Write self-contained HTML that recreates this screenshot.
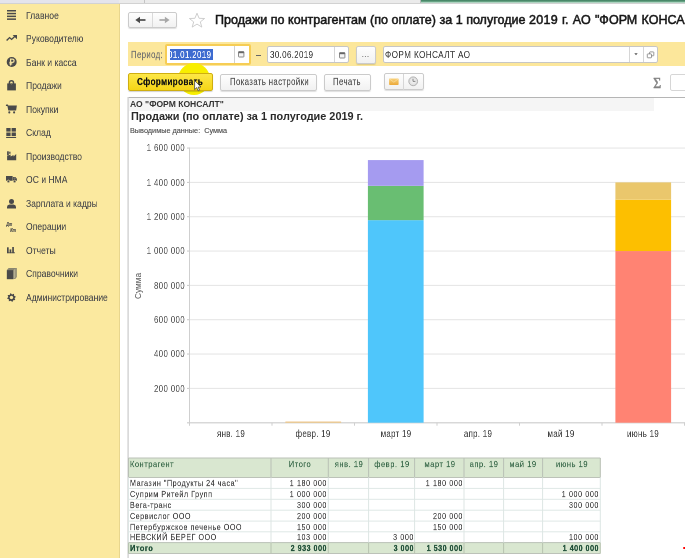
<!DOCTYPE html><html><head><meta charset="utf-8"><style>
*{margin:0;padding:0;box-sizing:border-box}
html,body{width:685px;height:558px;overflow:hidden;background:#fff;font-family:"Liberation Sans",sans-serif;position:relative}
.a{position:absolute}
.t{position:absolute;white-space:nowrap;line-height:1;will-change:transform}
.btn{position:absolute;background:linear-gradient(#fefefe,#f1f1f1);border:1px solid #cbcbcb;border-radius:2px;box-shadow:0 1px 1px rgba(0,0,0,.13)}
.fld{position:absolute;background:#fff;border:1px solid #c6c6c6;border-radius:2px}
svg{position:absolute;overflow:visible}
</style></head><body>
<div class="a" style="left:0;top:0;width:685px;height:3px;background:#ebebeb"></div>
<div class="a" style="left:0;top:3px;width:685px;height:1px;background:#d2d2d2"></div>
<div class="a" style="left:0;top:0;width:119px;height:3px;background:#e4e4ec"></div>
<div class="a" style="left:144px;top:0;width:1px;height:3px;background:#c4c4c4"></div>
<div class="a" style="left:420px;top:0;width:1px;height:3px;background:#b9b9b9"></div>
<div class="a" style="left:421px;top:0;width:264px;height:3px;background:linear-gradient(#3f7f60,#5b9a7a 45%,#d2ecdf)"></div>
<div class="a" style="left:0;top:4px;width:119px;height:554px;background:#fbe99f"></div>
<div class="a" style="left:119px;top:4px;width:1px;height:554px;background:#e8d68e"></div>
<div class="t" style="left:26.1px;top:10.70px;font-size:19.5px;color:#4f4f4f;-webkit-text-stroke:0.2px #4f4f4f;transform:scale(0.44,0.5);transform-origin:0 0">Главное</div>
<div class="t" style="left:26.1px;top:34.20px;font-size:19.5px;color:#4f4f4f;-webkit-text-stroke:0.2px #4f4f4f;transform:scale(0.44,0.5);transform-origin:0 0">Руководителю</div>
<div class="t" style="left:26.1px;top:57.70px;font-size:19.5px;color:#4f4f4f;-webkit-text-stroke:0.2px #4f4f4f;transform:scale(0.44,0.5);transform-origin:0 0">Банк и касса</div>
<div class="t" style="left:26.1px;top:81.20px;font-size:19.5px;color:#4f4f4f;-webkit-text-stroke:0.2px #4f4f4f;transform:scale(0.44,0.5);transform-origin:0 0">Продажи</div>
<div class="t" style="left:26.1px;top:104.70px;font-size:19.5px;color:#4f4f4f;-webkit-text-stroke:0.2px #4f4f4f;transform:scale(0.44,0.5);transform-origin:0 0">Покупки</div>
<div class="t" style="left:26.1px;top:128.20px;font-size:19.5px;color:#4f4f4f;-webkit-text-stroke:0.2px #4f4f4f;transform:scale(0.44,0.5);transform-origin:0 0">Склад</div>
<div class="t" style="left:26.1px;top:151.70px;font-size:19.5px;color:#4f4f4f;-webkit-text-stroke:0.2px #4f4f4f;transform:scale(0.44,0.5);transform-origin:0 0">Производство</div>
<div class="t" style="left:26.1px;top:175.20px;font-size:19.5px;color:#4f4f4f;-webkit-text-stroke:0.2px #4f4f4f;transform:scale(0.44,0.5);transform-origin:0 0">ОС и НМА</div>
<div class="t" style="left:26.1px;top:198.70px;font-size:19.5px;color:#4f4f4f;-webkit-text-stroke:0.2px #4f4f4f;transform:scale(0.44,0.5);transform-origin:0 0">Зарплата и кадры</div>
<div class="t" style="left:26.1px;top:222.20px;font-size:19.5px;color:#4f4f4f;-webkit-text-stroke:0.2px #4f4f4f;transform:scale(0.44,0.5);transform-origin:0 0">Операции</div>
<div class="t" style="left:26.1px;top:245.70px;font-size:19.5px;color:#4f4f4f;-webkit-text-stroke:0.2px #4f4f4f;transform:scale(0.44,0.5);transform-origin:0 0">Отчеты</div>
<div class="t" style="left:26.1px;top:269.20px;font-size:19.5px;color:#4f4f4f;-webkit-text-stroke:0.2px #4f4f4f;transform:scale(0.44,0.5);transform-origin:0 0">Справочники</div>
<div class="t" style="left:26.1px;top:292.70px;font-size:19.5px;color:#4f4f4f;-webkit-text-stroke:0.2px #4f4f4f;transform:scale(0.44,0.5);transform-origin:0 0">Администрирование</div>
<svg style="left:0;top:10.30px" width="24" height="24" viewBox="0 0 24 24"><g fill="#4a4a4a"><rect x="7" y="0" width="9" height="1.5"/><rect x="7" y="2.8" width="9" height="1.5"/><rect x="7" y="5.6" width="9" height="1.5"/><rect x="7" y="8.4" width="9" height="1.5"/></g></svg>
<svg style="left:0;top:35.10px" width="24" height="24" viewBox="0 0 24 24"><path d="M6.6 5.6 L9.6 2.6 L11.6 4.4 L15 1.2" fill="none" stroke="#4a4a4a" stroke-width="1.4"/><path d="M12.6 0 L17 0 L17 4.2 Z" fill="#4a4a4a"/></svg>
<svg style="left:0;top:57.30px" width="24" height="24" viewBox="0 0 24 24"><circle cx="11.7" cy="5" r="5" fill="#4a4a4a"/><path d="M10.6 8.5 V2.1 H12.5 A1.6 1.6 0 0 1 12.5 5.3 H9.4 M9.4 6.8 H12.3" fill="none" stroke="#f3e2a0" stroke-width="1.25"/></svg>
<svg style="left:0;top:79.80px" width="24" height="24" viewBox="0 0 24 24"><path d="M7.2 3.4 H15.9 V10.4 H7.2 Z" fill="#4a4a4a"/><path d="M9.4 4.6 V2.9 A2.05 2.1 0 0 1 13.5 2.9 V4.6" fill="none" stroke="#4a4a4a" stroke-width="1.5"/><rect x="11.1" y="3.4" width="0.9" height="1.4" fill="#77705a"/></svg>
<svg style="left:0;top:104.00px" width="24" height="24" viewBox="0 0 24 24"><rect x="5.9" y="0.5" width="2.3" height="1.5" rx="0.6" fill="#4a4a4a"/><path d="M7.3 1.6 H16.9 L16.1 6.6 H8.3 Z" fill="#4a4a4a"/><circle cx="9.3" cy="8.4" r="1.05" fill="#4a4a4a"/><circle cx="14.1" cy="8.4" r="1.05" fill="#4a4a4a"/></svg>
<svg style="left:0;top:127.70px" width="24" height="24" viewBox="0 0 24 24"><g fill="#4a4a4a"><rect x="6.3" y="0" width="4.3" height="3.6"/><rect x="11.6" y="0" width="4.3" height="3.6"/><rect x="6.3" y="4.5" width="4.3" height="3.6"/><rect x="11.6" y="4.5" width="4.3" height="3.6"/><rect x="6.1" y="9" width="10" height="1"/></g></svg>
<svg style="left:0;top:151.40px" width="24" height="24" viewBox="0 0 24 24"><path d="M7.1 9.2 V5.0 L10.6 3.6 V5.4 L13.5 3.9 V5.5 L16.2 3.0 V9.2 Z" fill="#4a4a4a"/><rect x="7.1" y="0.3" width="1.7" height="4.2" fill="#4a4a4a"/><rect x="9.2" y="0.7" width="1.3" height="2.1" fill="#4a4a4a"/></svg>
<svg style="left:0;top:176.40px" width="24" height="24" viewBox="0 0 24 24"><path d="M6.0 0 H12.6 V4.8 H6.0 Z M12.9 1.0 H15.3 L16.9 2.8 V4.8 H12.9 Z" fill="#4a4a4a"/><path d="M13.6 1.6 H15 L16 2.7 H13.6 Z" fill="#8a8470"/><circle cx="8.4" cy="5.4" r="1.3" fill="#4a4a4a" stroke="#fbe99f" stroke-width="0.6"/><circle cx="14.6" cy="5.4" r="1.3" fill="#4a4a4a" stroke="#fbe99f" stroke-width="0.6"/></svg>
<svg style="left:0;top:198.90px" width="24" height="24" viewBox="0 0 24 24"><circle cx="11.5" cy="2.6" r="2.5" fill="#4a4a4a"/><path d="M7 9.4 V8 Q7 5.8 9.5 5.6 H13.5 Q16 5.8 16 8 V9.4 Z" fill="#4a4a4a"/></svg>
<svg style="left:0;top:0;will-change:transform" width="24" height="240"><text x="6.3" y="226.3" font-family="Liberation Sans" font-weight="bold" font-style="italic" font-size="6.2" fill="#4a4a4a" stroke="#4a4a4a" stroke-width="0.2" textLength="5.8" lengthAdjust="spacingAndGlyphs">Дт</text><text x="10.2" y="231.6" font-family="Liberation Sans" font-weight="bold" font-style="italic" font-size="6.2" fill="#4a4a4a" stroke="#4a4a4a" stroke-width="0.2" textLength="5.8" lengthAdjust="spacingAndGlyphs">Кт</text></svg>
<svg style="left:0;top:247.30px" width="24" height="24" viewBox="0 0 24 24"><g fill="#4a4a4a"><rect x="7" y="0.3" width="1.7" height="5.8"/><rect x="9.6" y="2.4" width="1.7" height="3.7"/><rect x="12.2" y="0" width="1.7" height="6.1"/><rect x="7" y="5.4" width="8" height="0.8"/></g></svg>
<svg style="left:0;top:267.80px" width="24" height="24" viewBox="0 0 24 24"><path d="M8.6 0 H16.8 V9 L15.2 11 H6.9 V2 Z" fill="#8a8670"/><rect x="6.9" y="2.2" width="6.6" height="9" fill="#4a4a4a"/><path d="M13.5 2.2 L15.4 0.4 V9.4 L13.5 11.2" fill="#b3ae92"/></svg>
<svg style="left:0;top:292.60px" width="24" height="24" viewBox="0 0 24 24"><polygon points="15.96,3.65 14.59,5.17 15.27,7.11 13.23,7.21 12.35,9.06 10.83,7.69 8.89,8.37 8.79,6.33 6.94,5.45 8.31,3.93 7.63,1.99 9.67,1.89 10.55,0.04 12.07,1.41 14.01,0.73 14.11,2.77" fill="#4a4a4a"/><circle cx="11.45" cy="4.55" r="1.7" fill="#fbe99f"/></svg>
<div class="btn" style="left:128px;top:12px;width:49px;height:16px"></div>
<div class="a" style="left:152px;top:13px;width:1px;height:14px;background:#dadada"></div>
<svg style="left:0;top:0" width="685" height="40"><path d="M139.5 20 H145.5" stroke="#4a4a4a" stroke-width="1.7"/><path d="M135.3 20 L140 16.7 V23.3 Z" fill="#4a4a4a"/><path d="M159.4 20 H165.5" stroke="#a8a8a8" stroke-width="1.7"/><path d="M169.6 20 L164.9 16.7 V23.3 Z" fill="#a8a8a8"/><path d="M197 13.2 L199.1 18.3 L204.6 18.5 L200.3 21.9 L201.8 27.1 L197 24.1 L192.2 27.1 L193.7 21.9 L189.4 18.5 L194.9 18.3 Z" fill="none" stroke="#c8c8c8" stroke-width="0.9"/></svg>
<div class="t" style="left:215.3px;top:14.4px;font-size:12.54px;color:#151515;-webkit-text-stroke:0.5px #151515">Продажи по контрагентам (по оплате) за 1 полугодие</div>
<div class="t" style="left:529.1px;top:14.4px;font-size:12.54px;color:#151515;-webkit-text-stroke:0.5px #151515;letter-spacing:0.3px">2019</div>
<div class="t" style="left:562.3px;top:14.4px;font-size:12.54px;color:#151515;-webkit-text-stroke:0.5px #151515;word-spacing:0.8px">г. АО "ФОРМ КОНСАЛТ"</div>
<div class="a" style="left:128px;top:42px;width:557px;height:24.2px;background:#fce79b"></div>
<div class="t" style="left:131.0px;top:49.7px;font-size:19.5px;color:#707070;transform:scale(0.4,0.5);transform-origin:0 0;-webkit-text-stroke:0.3px #707070;letter-spacing:0.9px">Период:</div>
<div class="a" style="left:165px;top:44px;width:86px;height:21px;background:#fff;border:2px solid #f6cd55;border-radius:2px"></div>
<div class="a" style="left:234px;top:46px;width:1px;height:17px;background:#d0d0d0"></div>
<div class="a" style="left:169.5px;top:49px;width:43px;height:10.5px;background:#3d6bd0"></div>
<div class="a" style="left:169.5px;top:47px;width:64px;height:16px;overflow:hidden"><div class="t" style="left:-1.7px;top:2.7px;font-size:19.5px;color:#fff;-webkit-text-stroke:0.2px #fff;transform:scale(0.41,0.5);transform-origin:0 0;letter-spacing:0.8px">01.01.2019</div></div>
<svg style="left:238px;top:51.4px" width="8" height="8"><rect x="0.5" y="0.6" width="5.4" height="5.4" rx="0.5" fill="#f4f4f4" stroke="#6e6e6e" stroke-width="0.8"/><rect x="0.5" y="0.6" width="5.4" height="1.6" fill="#666"/></svg>
<div class="a" style="left:255.5px;top:54.6px;width:5px;height:1px;background:#666"></div>
<div class="fld" style="left:267px;top:46px;width:82px;height:17px"></div>
<div class="a" style="left:334px;top:47px;width:1px;height:15px;background:#d6d6d6"></div>
<div class="t" style="left:269.6px;top:49.7px;font-size:19.5px;color:#444;transform:scale(0.41,0.5);transform-origin:0 0;-webkit-text-stroke:0.2px #444;letter-spacing:0.8px">30.06.2019</div>
<svg style="left:338.5px;top:51.6px" width="8" height="8"><rect x="0.5" y="0.6" width="5.4" height="5.4" rx="0.5" fill="#f4f4f4" stroke="#6e6e6e" stroke-width="0.8"/><rect x="0.5" y="0.6" width="5.4" height="1.6" fill="#666"/></svg>
<div class="btn" style="left:356px;top:46px;width:20px;height:18px"></div>
<svg style="left:0;top:0" width="685" height="70"><g fill="#6a6a6a"><circle cx="362.8" cy="56.5" r="0.55"/><circle cx="365.4" cy="56.5" r="0.55"/><circle cx="368" cy="56.5" r="0.55"/></g></svg>
<div class="fld" style="left:382.5px;top:46px;width:275.5px;height:17px"></div>
<div class="a" style="left:629px;top:47px;width:1px;height:15px;background:#d6d6d6"></div>
<div class="a" style="left:643px;top:47px;width:1px;height:15px;background:#d6d6d6"></div>
<div class="t" style="left:385.4px;top:49.9px;font-size:19.5px;color:#444;transform:scale(0.42,0.5);transform-origin:0 0;-webkit-text-stroke:0.2px #444;letter-spacing:0.9px">ФОРМ КОНСАЛТ АО</div>
<svg style="left:0;top:0" width="685" height="90"><path d="M634.3 53.3 H637.7 L636 55.3 Z" fill="#555"/><rect x="649.6" y="51.9" width="4.2" height="3.9" rx="0.5" fill="none" stroke="#777" stroke-width="0.75"/><rect x="647.3" y="53.9" width="4.2" height="3.9" rx="0.5" fill="#fff" stroke="#777" stroke-width="0.75"/></svg>
<div class="a" style="left:177.7px;top:63px;width:32px;height:32px;border-radius:50%;background:#f8ee00"></div>
<div class="a" style="left:128px;top:73px;width:85px;height:17.5px;background:linear-gradient(#fde747,#f5d516);border:1px solid #cfae10;border-radius:2px;box-shadow:0 1px 1px rgba(0,0,0,.18)"></div>
<div class="t" style="left:137px;top:76.8px;font-size:19.5px;font-weight:bold;color:#111;-webkit-text-stroke:0.3px #111;transform:scale(0.42,0.5);transform-origin:0 0;letter-spacing:0.75px">Сформировать</div>
<div class="btn" style="left:220px;top:73.5px;width:97px;height:17px"></div>
<div class="t" style="left:229.5px;top:76.8px;font-size:19.5px;color:#555;transform:scale(0.4,0.5);transform-origin:0 0;-webkit-text-stroke:0.3px #555;letter-spacing:0.95px">Показать настройки</div>
<div class="btn" style="left:324px;top:73.5px;width:47px;height:17px"></div>
<div class="t" style="left:333.3px;top:76.8px;font-size:19.5px;color:#555;transform:scale(0.4,0.5);transform-origin:0 0;-webkit-text-stroke:0.3px #555;letter-spacing:1.0px">Печать</div>
<div class="btn" style="left:384px;top:73.3px;width:40px;height:17px"></div>
<div class="a" style="left:403px;top:74px;width:1px;height:15.5px;background:#d6d6d6"></div>
<svg style="left:0;top:0" width="685" height="100"><defs><linearGradient id="env" x1="0" y1="0" x2="0" y2="1"><stop offset="0" stop-color="#f8d27c"/><stop offset="1" stop-color="#eba93a"/></linearGradient><radialGradient id="clk"><stop offset="0" stop-color="#f6f6f6"/><stop offset="1" stop-color="#dcdcdc"/></radialGradient></defs><rect x="389.1" y="78.4" width="9.5" height="6.6" rx="0.8" fill="url(#env)"/><path d="M389.5 78.9 L393.85 82.2 L398.2 78.9" fill="none" stroke="#fbe1a6" stroke-width="0.7"/><circle cx="413.2" cy="81.3" r="4.4" fill="url(#clk)" stroke="#ababab" stroke-width="0.9"/><path d="M413.0 78.8 V81.4 H415.4" fill="none" stroke="#7c7c7c" stroke-width="0.9"/><text x="653.3" y="87.8" font-family="Liberation Serif" font-size="13.6" fill="#828282" stroke="#828282" stroke-width="0.45">Σ</text></svg>
<div class="a" style="left:670px;top:74px;width:20px;height:16.5px;background:#fff;border:1px solid #d6d6d6;border-radius:2px"></div>
<div class="a" style="left:128px;top:97px;width:557px;height:1px;background:#b5b5b5"></div>
<svg style="left:0;top:0" width="685" height="558"><rect x="127.4" y="97" width="1.4" height="461" fill="#d2d2d2"/></svg>
<div class="a" style="left:129px;top:98px;width:524.5px;height:12.7px;background:#f5f5f5"></div>
<div class="t" style="left:130.3px;top:100px;font-size:8.55px;font-weight:bold;color:#333">АО "ФОРМ КОНСАЛТ"</div>
<div class="t" style="left:130.8px;top:111.4px;font-size:10.9px;font-weight:bold;color:#2a2a2a">Продажи (по оплате) за 1 полугодие 2019 г.</div>
<div class="t" style="left:130.3px;top:127.2px;font-size:7.3px;color:#484848;-webkit-text-stroke:0.1px #484848">Выводимые данные:&nbsp; Сумма</div>
<svg style="left:0;top:0" width="685" height="558"><rect x="189.5" y="387.87" width="495.5" height="1" fill="#e4e4e4"/><rect x="187.0" y="387.87" width="2.5" height="1" fill="#c8c8c8"/><rect x="189.5" y="353.54" width="495.5" height="1" fill="#e4e4e4"/><rect x="187.0" y="353.54" width="2.5" height="1" fill="#c8c8c8"/><rect x="189.5" y="319.21" width="495.5" height="1" fill="#e4e4e4"/><rect x="187.0" y="319.21" width="2.5" height="1" fill="#c8c8c8"/><rect x="189.5" y="284.88" width="495.5" height="1" fill="#e4e4e4"/><rect x="187.0" y="284.88" width="2.5" height="1" fill="#c8c8c8"/><rect x="189.5" y="250.55" width="495.5" height="1" fill="#e4e4e4"/><rect x="187.0" y="250.55" width="2.5" height="1" fill="#c8c8c8"/><rect x="189.5" y="216.22" width="495.5" height="1" fill="#e4e4e4"/><rect x="187.0" y="216.22" width="2.5" height="1" fill="#c8c8c8"/><rect x="189.5" y="181.89" width="495.5" height="1" fill="#e4e4e4"/><rect x="187.0" y="181.89" width="2.5" height="1" fill="#c8c8c8"/><rect x="189.5" y="147.56" width="495.5" height="1" fill="#e4e4e4"/><rect x="187.0" y="147.56" width="2.5" height="1" fill="#c8c8c8"/><rect x="189.0" y="147.56" width="1" height="277.64" fill="#cfcfcf"/><rect x="187.0" y="422.20" width="498.0" height="1.2" fill="#cfcfcf"/><rect x="189.00" y="422.70" width="1" height="3" fill="#cfcfcf"/><rect x="271.50" y="422.70" width="1" height="3" fill="#cfcfcf"/><rect x="354.00" y="422.70" width="1" height="3" fill="#cfcfcf"/><rect x="436.50" y="422.70" width="1" height="3" fill="#cfcfcf"/><rect x="519.00" y="422.70" width="1" height="3" fill="#cfcfcf"/><rect x="601.50" y="422.70" width="1" height="3" fill="#cfcfcf"/><rect x="684.00" y="422.70" width="1" height="3" fill="#cfcfcf"/><rect x="285.40" y="422.19" width="55.7" height="0.51" fill="#eac46a"/><rect x="285.40" y="421.50" width="55.7" height="1" fill="#f0c890"/><rect x="367.90" y="220.15" width="55.7" height="202.55" fill="#4fc6fb"/><rect x="367.90" y="185.82" width="55.7" height="34.33" fill="#69be72"/><rect x="367.90" y="160.08" width="55.7" height="25.75" fill="#a59bf0"/><rect x="615.40" y="251.05" width="55.7" height="171.65" fill="#ff8373"/><rect x="615.40" y="199.55" width="55.7" height="51.50" fill="#fdbf00"/><rect x="615.40" y="182.39" width="55.7" height="17.16" fill="#eac76c"/></svg>
<div class="t" style="left:35.20px;width:150px;text-align:right;top:383.67px;font-size:19.5px;color:#555;-webkit-text-stroke:0.15px #555;letter-spacing:1.0px;transform:scale(0.40,0.5);transform-origin:150px 0">200 000</div>
<div class="t" style="left:35.20px;width:150px;text-align:right;top:349.34px;font-size:19.5px;color:#555;-webkit-text-stroke:0.15px #555;letter-spacing:1.0px;transform:scale(0.40,0.5);transform-origin:150px 0">400 000</div>
<div class="t" style="left:35.20px;width:150px;text-align:right;top:315.01px;font-size:19.5px;color:#555;-webkit-text-stroke:0.15px #555;letter-spacing:1.0px;transform:scale(0.40,0.5);transform-origin:150px 0">600 000</div>
<div class="t" style="left:35.20px;width:150px;text-align:right;top:280.68px;font-size:19.5px;color:#555;-webkit-text-stroke:0.15px #555;letter-spacing:1.0px;transform:scale(0.40,0.5);transform-origin:150px 0">800 000</div>
<div class="t" style="left:35.20px;width:150px;text-align:right;top:246.35px;font-size:19.5px;color:#555;-webkit-text-stroke:0.15px #555;letter-spacing:1.0px;transform:scale(0.40,0.5);transform-origin:150px 0">1 000 000</div>
<div class="t" style="left:35.20px;width:150px;text-align:right;top:212.02px;font-size:19.5px;color:#555;-webkit-text-stroke:0.15px #555;letter-spacing:1.0px;transform:scale(0.40,0.5);transform-origin:150px 0">1 200 000</div>
<div class="t" style="left:35.20px;width:150px;text-align:right;top:177.69px;font-size:19.5px;color:#555;-webkit-text-stroke:0.15px #555;letter-spacing:1.0px;transform:scale(0.40,0.5);transform-origin:150px 0">1 400 000</div>
<div class="t" style="left:35.20px;width:150px;text-align:right;top:143.36px;font-size:19.5px;color:#555;-webkit-text-stroke:0.15px #555;letter-spacing:1.0px;transform:scale(0.40,0.5);transform-origin:150px 0">1 600 000</div>
<div class="t" style="left:130.75px;width:200px;text-align:center;top:428.6px;font-size:19.5px;color:#444;-webkit-text-stroke:0.15px #444;letter-spacing:0.6px;transform:scale(0.41,0.5);transform-origin:100px 0">янв. 19</div>
<div class="t" style="left:213.25px;width:200px;text-align:center;top:428.6px;font-size:19.5px;color:#444;-webkit-text-stroke:0.15px #444;letter-spacing:0.6px;transform:scale(0.41,0.5);transform-origin:100px 0">февр. 19</div>
<div class="t" style="left:295.75px;width:200px;text-align:center;top:428.6px;font-size:19.5px;color:#444;-webkit-text-stroke:0.15px #444;letter-spacing:0.6px;transform:scale(0.41,0.5);transform-origin:100px 0">март 19</div>
<div class="t" style="left:378.25px;width:200px;text-align:center;top:428.6px;font-size:19.5px;color:#444;-webkit-text-stroke:0.15px #444;letter-spacing:0.6px;transform:scale(0.41,0.5);transform-origin:100px 0">апр. 19</div>
<div class="t" style="left:460.75px;width:200px;text-align:center;top:428.6px;font-size:19.5px;color:#444;-webkit-text-stroke:0.15px #444;letter-spacing:0.6px;transform:scale(0.41,0.5);transform-origin:100px 0">май 19</div>
<div class="t" style="left:543.25px;width:200px;text-align:center;top:428.6px;font-size:19.5px;color:#444;-webkit-text-stroke:0.15px #444;letter-spacing:0.6px;transform:scale(0.41,0.5);transform-origin:100px 0">июнь 19</div>
<div class="t" style="left:110.5px;top:282px;font-size:8.3px;color:#555;transform:rotate(-90deg);transform-origin:27px 4px;width:54px;text-align:center">Сумма</div>
<svg style="left:0;top:0" width="685" height="558"><rect x="128.5" y="458" width="471.79999999999995" height="19.5" fill="#d9e7d0"/><rect x="128.5" y="542.6" width="471.79999999999995" height="10.899999999999977" fill="#d9e7d0"/><rect x="128.5" y="457.5" width="471.79999999999995" height="1" fill="#bcc2b8"/><rect x="128.5" y="477.0" width="471.79999999999995" height="1" fill="#bcc2b8"/><rect x="128.5" y="487.9" width="471.79999999999995" height="1" fill="#dfe8e6"/><rect x="128.5" y="498.8" width="471.79999999999995" height="1" fill="#dfe8e6"/><rect x="128.5" y="509.7" width="471.79999999999995" height="1" fill="#dfe8e6"/><rect x="128.5" y="520.6" width="471.79999999999995" height="1" fill="#dfe8e6"/><rect x="128.5" y="531.3" width="471.79999999999995" height="1" fill="#dfe8e6"/><rect x="128.5" y="542.1" width="471.79999999999995" height="1" fill="#bcc2b8"/><rect x="128.5" y="553.0" width="471.79999999999995" height="1" fill="#bcc2b8"/><rect x="128.0" y="458" width="1" height="19.5" fill="#b9c0b5"/><rect x="128.0" y="477.5" width="1" height="65.10000000000002" fill="#dde6e4"/><rect x="128.0" y="542.6" width="1" height="10.899999999999977" fill="#b7c4b0"/><rect x="270.5" y="458" width="1" height="19.5" fill="#b9c0b5"/><rect x="270.5" y="477.5" width="1" height="65.10000000000002" fill="#dde6e4"/><rect x="270.5" y="542.6" width="1" height="10.899999999999977" fill="#b7c4b0"/><rect x="327.8" y="458" width="1" height="19.5" fill="#b9c0b5"/><rect x="327.8" y="477.5" width="1" height="65.10000000000002" fill="#dde6e4"/><rect x="327.8" y="542.6" width="1" height="10.899999999999977" fill="#b7c4b0"/><rect x="368.1" y="458" width="1" height="19.5" fill="#b9c0b5"/><rect x="368.1" y="477.5" width="1" height="65.10000000000002" fill="#dde6e4"/><rect x="368.1" y="542.6" width="1" height="10.899999999999977" fill="#b7c4b0"/><rect x="414.1" y="458" width="1" height="19.5" fill="#b9c0b5"/><rect x="414.1" y="477.5" width="1" height="65.10000000000002" fill="#dde6e4"/><rect x="414.1" y="542.6" width="1" height="10.899999999999977" fill="#b7c4b0"/><rect x="463.5" y="458" width="1" height="19.5" fill="#b9c0b5"/><rect x="463.5" y="477.5" width="1" height="65.10000000000002" fill="#dde6e4"/><rect x="463.5" y="542.6" width="1" height="10.899999999999977" fill="#b7c4b0"/><rect x="503.1" y="458" width="1" height="19.5" fill="#b9c0b5"/><rect x="503.1" y="477.5" width="1" height="65.10000000000002" fill="#dde6e4"/><rect x="503.1" y="542.6" width="1" height="10.899999999999977" fill="#b7c4b0"/><rect x="542.1" y="458" width="1" height="19.5" fill="#b9c0b5"/><rect x="542.1" y="477.5" width="1" height="65.10000000000002" fill="#dde6e4"/><rect x="542.1" y="542.6" width="1" height="10.899999999999977" fill="#b7c4b0"/><rect x="599.8" y="458" width="1" height="19.5" fill="#b9c0b5"/><rect x="599.8" y="477.5" width="1" height="65.10000000000002" fill="#dde6e4"/><rect x="599.8" y="542.6" width="1" height="10.899999999999977" fill="#b7c4b0"/></svg>
<div class="t" style="left:130.10px;top:459.80px;width:400px;text-align:left;font-size:17px;color:#3a6a4b;-webkit-text-stroke:0.3px #3a6a4b;letter-spacing:1.25px;transform:scale(0.44,0.5);transform-origin:0 0">Контрагент</div>
<div class="t" style="left:99.92px;top:459.80px;width:400px;text-align:center;font-size:17px;color:#3a6a4b;-webkit-text-stroke:0.3px #3a6a4b;letter-spacing:1.25px;transform:scale(0.44,0.5);transform-origin:200.0px 0">Итого</div>
<div class="t" style="left:148.73px;top:459.80px;width:400px;text-align:center;font-size:17px;color:#3a6a4b;-webkit-text-stroke:0.3px #3a6a4b;letter-spacing:1.25px;transform:scale(0.44,0.5);transform-origin:200.0px 0">янв. 19</div>
<div class="t" style="left:191.88px;top:459.80px;width:400px;text-align:center;font-size:17px;color:#3a6a4b;-webkit-text-stroke:0.3px #3a6a4b;letter-spacing:1.25px;transform:scale(0.44,0.5);transform-origin:200.0px 0">февр. 19</div>
<div class="t" style="left:239.58px;top:459.80px;width:400px;text-align:center;font-size:17px;color:#3a6a4b;-webkit-text-stroke:0.3px #3a6a4b;letter-spacing:1.25px;transform:scale(0.44,0.5);transform-origin:200.0px 0">март 19</div>
<div class="t" style="left:284.07px;top:459.80px;width:400px;text-align:center;font-size:17px;color:#3a6a4b;-webkit-text-stroke:0.3px #3a6a4b;letter-spacing:1.25px;transform:scale(0.44,0.5);transform-origin:200.0px 0">апр. 19</div>
<div class="t" style="left:323.38px;top:459.80px;width:400px;text-align:center;font-size:17px;color:#3a6a4b;-webkit-text-stroke:0.3px #3a6a4b;letter-spacing:1.25px;transform:scale(0.44,0.5);transform-origin:200.0px 0">май 19</div>
<div class="t" style="left:371.73px;top:459.80px;width:400px;text-align:center;font-size:17px;color:#3a6a4b;-webkit-text-stroke:0.3px #3a6a4b;letter-spacing:1.25px;transform:scale(0.44,0.5);transform-origin:200.0px 0">июнь 19</div>
<div class="t" style="left:130.10px;top:479.10px;width:400px;text-align:left;font-size:17px;color:#444;-webkit-text-stroke:0.3px #444;letter-spacing:1.3px;transform:scale(0.42,0.5);transform-origin:0 0">Магазин "Продукты 24 часа"</div>
<div class="t" style="left:-72.69px;top:479.10px;width:400px;text-align:right;font-size:17px;color:#444;-webkit-text-stroke:0.25px #444;letter-spacing:1.45px;transform:scale(0.42,0.5);transform-origin:400px 0">1 180 000</div>
<div class="t" style="left:63.01px;top:479.10px;width:400px;text-align:right;font-size:17px;color:#444;-webkit-text-stroke:0.25px #444;letter-spacing:1.45px;transform:scale(0.42,0.5);transform-origin:400px 0">1 180 000</div>
<div class="t" style="left:130.10px;top:490.00px;width:400px;text-align:left;font-size:17px;color:#444;-webkit-text-stroke:0.3px #444;letter-spacing:1.3px;transform:scale(0.42,0.5);transform-origin:0 0">Суприм Ритейл Групп</div>
<div class="t" style="left:-72.69px;top:490.00px;width:400px;text-align:right;font-size:17px;color:#444;-webkit-text-stroke:0.25px #444;letter-spacing:1.45px;transform:scale(0.42,0.5);transform-origin:400px 0">1 000 000</div>
<div class="t" style="left:199.31px;top:490.00px;width:400px;text-align:right;font-size:17px;color:#444;-webkit-text-stroke:0.25px #444;letter-spacing:1.45px;transform:scale(0.42,0.5);transform-origin:400px 0">1 000 000</div>
<div class="t" style="left:130.10px;top:500.90px;width:400px;text-align:left;font-size:17px;color:#444;-webkit-text-stroke:0.3px #444;letter-spacing:1.3px;transform:scale(0.42,0.5);transform-origin:0 0">Вега-транс</div>
<div class="t" style="left:-72.69px;top:500.90px;width:400px;text-align:right;font-size:17px;color:#444;-webkit-text-stroke:0.25px #444;letter-spacing:1.45px;transform:scale(0.42,0.5);transform-origin:400px 0">300 000</div>
<div class="t" style="left:199.31px;top:500.90px;width:400px;text-align:right;font-size:17px;color:#444;-webkit-text-stroke:0.25px #444;letter-spacing:1.45px;transform:scale(0.42,0.5);transform-origin:400px 0">300 000</div>
<div class="t" style="left:130.10px;top:511.80px;width:400px;text-align:left;font-size:17px;color:#444;-webkit-text-stroke:0.3px #444;letter-spacing:1.3px;transform:scale(0.42,0.5);transform-origin:0 0">Сервислог ООО</div>
<div class="t" style="left:-72.69px;top:511.80px;width:400px;text-align:right;font-size:17px;color:#444;-webkit-text-stroke:0.25px #444;letter-spacing:1.45px;transform:scale(0.42,0.5);transform-origin:400px 0">200 000</div>
<div class="t" style="left:63.01px;top:511.80px;width:400px;text-align:right;font-size:17px;color:#444;-webkit-text-stroke:0.25px #444;letter-spacing:1.45px;transform:scale(0.42,0.5);transform-origin:400px 0">200 000</div>
<div class="t" style="left:130.10px;top:522.70px;width:400px;text-align:left;font-size:17px;color:#444;-webkit-text-stroke:0.3px #444;letter-spacing:1.3px;transform:scale(0.42,0.5);transform-origin:0 0">Петербуржское печенье ООО</div>
<div class="t" style="left:-72.69px;top:522.70px;width:400px;text-align:right;font-size:17px;color:#444;-webkit-text-stroke:0.25px #444;letter-spacing:1.45px;transform:scale(0.42,0.5);transform-origin:400px 0">150 000</div>
<div class="t" style="left:63.01px;top:522.70px;width:400px;text-align:right;font-size:17px;color:#444;-webkit-text-stroke:0.25px #444;letter-spacing:1.45px;transform:scale(0.42,0.5);transform-origin:400px 0">150 000</div>
<div class="t" style="left:130.10px;top:533.40px;width:400px;text-align:left;font-size:17px;color:#444;-webkit-text-stroke:0.3px #444;letter-spacing:1.3px;transform:scale(0.42,0.5);transform-origin:0 0">НЕВСКИЙ БЕРЕГ ООО</div>
<div class="t" style="left:-72.69px;top:533.40px;width:400px;text-align:right;font-size:17px;color:#444;-webkit-text-stroke:0.25px #444;letter-spacing:1.45px;transform:scale(0.42,0.5);transform-origin:400px 0">103 000</div>
<div class="t" style="left:13.61px;top:533.40px;width:400px;text-align:right;font-size:17px;color:#444;-webkit-text-stroke:0.25px #444;letter-spacing:1.45px;transform:scale(0.42,0.5);transform-origin:400px 0">3 000</div>
<div class="t" style="left:199.31px;top:533.40px;width:400px;text-align:right;font-size:17px;color:#444;-webkit-text-stroke:0.25px #444;letter-spacing:1.45px;transform:scale(0.42,0.5);transform-origin:400px 0">100 000</div>
<div class="t" style="left:130.10px;top:544.20px;width:400px;text-align:left;font-size:17px;font-weight:bold;color:#22513a;-webkit-text-stroke:0.6px #22513a;letter-spacing:1.0px;transform:scale(0.44,0.5);transform-origin:0 0">Итого</div>
<div class="t" style="left:-72.80px;top:544.20px;width:400px;text-align:right;font-size:17px;font-weight:bold;color:#22513a;-webkit-text-stroke:0.6px #22513a;letter-spacing:1.2px;transform:scale(0.42,0.5);transform-origin:400px 0">2 933 000</div>
<div class="t" style="left:13.50px;top:544.20px;width:400px;text-align:right;font-size:17px;font-weight:bold;color:#22513a;-webkit-text-stroke:0.6px #22513a;letter-spacing:1.2px;transform:scale(0.42,0.5);transform-origin:400px 0">3 000</div>
<div class="t" style="left:62.90px;top:544.20px;width:400px;text-align:right;font-size:17px;font-weight:bold;color:#22513a;-webkit-text-stroke:0.6px #22513a;letter-spacing:1.2px;transform:scale(0.42,0.5);transform-origin:400px 0">1 530 000</div>
<div class="t" style="left:199.20px;top:544.20px;width:400px;text-align:right;font-size:17px;font-weight:bold;color:#22513a;-webkit-text-stroke:0.6px #22513a;letter-spacing:1.2px;transform:scale(0.42,0.5);transform-origin:400px 0">1 400 000</div>
<div class="a" style="left:683px;top:546.5px;width:2.5px;height:2.5px;background:#f00;border-radius:50%"></div>
<svg style="left:0;top:0" width="685" height="558"><path d="M194.6 80.4 V89.6 L196.7 87.6 L198.2 90.8 L199.6 90.2 L198.1 87.1 L200.9 87.0 Z" fill="#fff" stroke="#333" stroke-width="0.7"/></svg>
</body></html>
